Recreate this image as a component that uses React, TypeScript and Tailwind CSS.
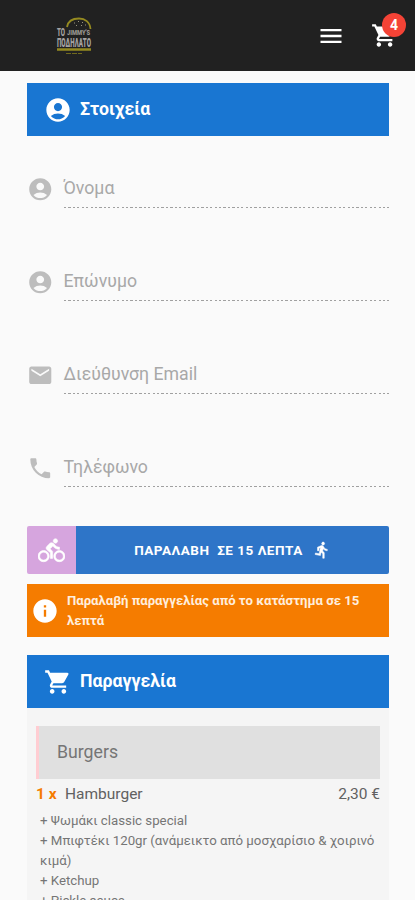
import {
  MdAccountCircle,
  MdDirectionsBike,
  MdDirectionsRun,
  MdEmail,
  MdInfo,
  MdMenu,
  MdPhone,
  MdShoppingCart,
} from 'react-icons/md'

const fields = [
  { id: 'name', label: 'Όνομα', icon: MdAccountCircle },
  { id: 'surname', label: 'Επώνυμο', icon: MdAccountCircle },
  { id: 'email', label: 'Διεύθυνση Email', icon: MdEmail },
  { id: 'phone', label: 'Τηλέφωνο', icon: MdPhone },
]

const extras = [
  'Ψωμάκι classic special',
  'Μπιφτέκι 120gr (ανάμεικτο από μοσχαρίσιο & χοιρινό κιμά)',
  'Ketchup',
  'Pickle sauce',
]

function Logo() {
  return (
    <svg className="w-9 h-[38px]" viewBox="0 0 36 38" fontFamily="Roboto, sans-serif" fontWeight="900">
      <path d="M11 10C12 4 17 1.500 23 1.500S34 5 34.500 12" fill="none" stroke="#958a20" strokeWidth="1.800" />
      <path d="M18 6h1M22 4.500h1M26 5.500h1M20 8.500h1M25 8.500h1M29 8h1" stroke="#98927c" />
      <text x="1" y="18.500" fontSize="10" fill="#a5a3a2" textLength="8" lengthAdjust="spacingAndGlyphs">ΤΟ</text>
      <text x="11" y="18" fontSize="8" fill="#989590" textLength="23" lengthAdjust="spacingAndGlyphs">JIMMY'S</text>
      <text x="1" y="30" fontSize="12.500" fill="#a5a3a2" textLength="34" lengthAdjust="spacingAndGlyphs">ΠΟΔΗΛΑΤΟ</text>
      <path d="M1 32.500h34" stroke="#958a20" strokeWidth="2.500" />
      <path d="M10 36.500h16" stroke="#70691e" strokeDasharray="5 1" />
    </svg>
  )
}

function SectionTitle({ icon: Icon, children }: { icon: typeof MdInfo; children: string }) {
  return (
    <h2 className="flex items-center gap-2 h-[53px] pl-[17px] bg-[#1976d2] text-white text-[17.700px] font-bold">
      <Icon className="size-7" />
      <span>{children}</span>
    </h2>
  )
}

export default function App() {
  return (
    <div className="h-[900px] overflow-hidden bg-[#fafafa] font-['Roboto',sans-serif]">
      <header className="flex items-center justify-between h-[71px] pl-14 pr-[17px] bg-[#212121] text-white">
        <Logo />
        <div className="flex items-center gap-[26px]">
          <MdMenu className="size-[28px]" />
          <div className="relative">
            <MdShoppingCart className="size-[27px]" />
            <span className="absolute -top-[9px] left-[11px] flex items-center justify-center size-6 rounded-full bg-[#f44336] text-[14px] font-bold">
              4
            </span>
          </div>
        </div>
      </header>

      <main className="pl-[27px] pr-[26px] pt-3">
        <SectionTitle icon={MdAccountCircle}>Στοιχεία</SectionTitle>

        <div className="flex flex-col gap-[54px] pt-[33px]">
          {fields.map(({ id, label, icon: Icon }) => (
            <div key={id} className="flex items-start h-[39px] gap-2.5">
              <Icon className="size-[26.500px] mt-[6.500px] text-[#bdbdbd]" />
              <div className="flex flex-1 flex-col justify-between h-[39px] pt-[6px] text-[17.700px] leading-[27px] text-[#a8a8a8]">
                <span>{label}</span>
                <div className="h-px bg-[repeating-linear-gradient(90deg,#a0a0a0_0_2.200px,transparent_2.200px_4.430px)]" />
              </div>
            </div>
          ))}
        </div>

        <div className="flex h-12 mt-[39px] rounded-xs overflow-hidden text-white">
          <button className="flex items-center justify-center w-[49px] bg-[#d6a5de]">
            <MdDirectionsBike className="size-[27px] [&>path:last-child]:stroke-[0.500]" />
          </button>
          <button className="flex flex-1 items-center justify-center gap-[10px] bg-[#2e75c8] text-[13.500px] font-bold tracking-[0.500px]">
            <span className="whitespace-pre">ΠΑΡΑΛΑΒΗ  ΣΕ 15 ΛΕΠΤΑ</span>
            <MdDirectionsRun className="size-[18px] [&>path:last-child]:stroke-[0.700]" />
          </button>
        </div>

        <div className="flex items-center gap-2 h-[53px] mt-[10px] pl-1 pr-5 bg-[#f57c00] text-[#ffeedd] text-[13.150px] leading-5 font-bold">
          <MdInfo className="size-7 shrink-0 text-white" />
          <p>Παραλαβή παραγγελίας από το κατάστημα σε 15 λεπτά</p>
        </div>

        <div className="mt-[18px] bg-[#f5f5f5]">
          <SectionTitle icon={MdShoppingCart}>Παραγγελία</SectionTitle>
          <div className="px-[9px] pt-[18px]">
            <h3 className="flex items-center h-[53px] pl-[18px] bg-[#e0e0e0] border-l-[3px] border-[#ffcdd2] text-[17.700px] text-[#757575]">
              Burgers
            </h3>
            <div className="flex items-center h-8 text-[15.500px] text-[#616161]">
              <span className="w-[29px] font-bold text-[#f57c00]">1 x</span>
              <span>Hamburger</span>
              <span className="ml-auto">2,30 €</span>
            </div>
            <ul className="pl-1 text-[13.250px] leading-5 text-[#757575]">
              {extras.map((extra) => (
                <li key={extra}>+ {extra}</li>
              ))}
            </ul>
          </div>
        </div>
      </main>
    </div>
  )
}
